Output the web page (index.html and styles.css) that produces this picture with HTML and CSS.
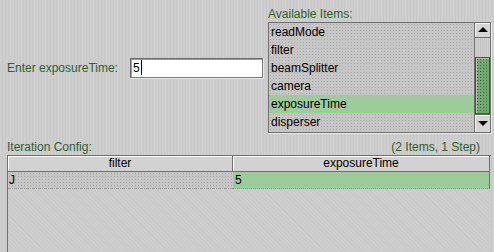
FILE: index.html
```html
<!DOCTYPE html>
<html lang="en">
<head>
    <meta charset="UTF-8">
    <title>Iteration Config</title>
    <link rel="stylesheet" href="styles.css">
</head>
<body>

    <div class="top">
        <div class="entry">
            <span class="label">Enter exposureTime:</span>
            <div class="field">5<span class="caret"></span></div>
        </div>

        <div class="avail">
            <div class="label avail-label">Available Items:</div>
            <div class="listbox">
                <ul class="items">
                    <li>readMode</li>
                    <li>filter</li>
                    <li>beamSplitter</li>
                    <li>camera</li>
                    <li class="selected">exposureTime</li>
                    <li>disperser</li>
                </ul>
                <div class="scrollbar">
                    <div class="arrow up"></div>
                    <div class="track"></div>
                    <div class="thumb"></div>
                    <div class="arrow down"></div>
                </div>
            </div>
        </div>
    </div>

    <div class="config-head label">
        <span>Iteration Config:</span>
        <span>(2 Items, 1 Step)</span>
    </div>

    <div class="grid">
        <div class="row head">
            <div class="cell">filter</div>
            <div class="cell">exposureTime</div>
        </div>
        <div class="row data">
            <div class="cell">J</div>
            <div class="cell green">5</div>
        </div>
    </div>

</body>
</html>
```

FILE: styles.css
```css
/* Page with a light stripe texture */
html, body {
    height: 100%;
}

body {
    margin: 0;
    display: flex;
    flex-direction: column;
    font-family: 'Liberation Sans', Arial, sans-serif;
    font-size: 12px;
    color: #000;
    background: repeating-linear-gradient(90deg, #cecece 0 2px, #c8c8c8 2px 3px);
}

.label {
    color: #2f5f2f;
}

/* Top area */
.top {
    display: flex;
    gap: 5px;
    padding: 6px 3px 0 7px;
}

.entry {
    width: 256px;
    display: flex;
    align-items: center;
    align-self: center;
    gap: 12px;
    margin-bottom: 4px;
}

.field {
    flex: 1;
    height: 18px;
    line-height: 18px;
    padding-left: 2px;
    background: #fff;
    border: 1px solid #6b6b6b;
    border-right-color: #7a7a7a;
    border-bottom-color: #7a7a7a;
    box-shadow: inset 1px 1px 0 #9a9a9a, 1px 1px 0 #e8e8e8;
    display: flex;
    align-items: center;
}

.caret {
    width: 1px;
    height: 15px;
    background: #000;
    margin-left: 1px;
}

.avail {
    width: 223px;
}

.avail-label {
    line-height: 16px;
}

/* List with scroll bar */
.listbox {
    display: flex;
    border: 1px solid #6e6e6e;
    box-shadow: 1px 1px 0 #ececec;
    background-color: #c6c6c6;
    background-image: radial-gradient(#aaaaaa 0.7px, transparent 0.8px);
    background-size: 3px 3px;
}

.items {
    flex: 1;
    list-style: none;
    margin: 0;
    padding: 0;
}

.items li {
    height: 18px;
    line-height: 18px;
    padding-left: 2px;
}

.items li.selected {
    background: #9dcc9b;
}

.scrollbar {
    width: 15px;
    display: flex;
    flex-direction: column;
    border-left: 1px solid #6e6e6e;
}

.arrow {
    background: #d6d6d6;
    box-shadow: inset 1px 1px 0 #f4f4f4;
    position: relative;
}

.arrow.up {
    height: 14px;
    border-bottom: 1px solid #6e6e6e;
}

.arrow.down {
    height: 17px;
    border-top: 1px solid #6e6e6e;
}

.arrow::after {
    content: "";
    position: absolute;
    left: 3px;
    border-left: 5px solid transparent;
    border-right: 5px solid transparent;
}

.arrow.up::after {
    top: 4px;
    border-bottom: 5px solid #000;
}

.arrow.down::after {
    top: 6px;
    border-top: 5px solid #000;
}

.track {
    height: 19px;
    background: repeating-linear-gradient(90deg, #d0d0d0 0 1px, #c4c4c4 1px 2px);
}

.thumb {
    height: 55px;
    border: 1px solid #2f5f2f;
    box-shadow: inset 1px 1px 0 #a8d8a6;
    background-color: #74a872;
    background-image: radial-gradient(#3a6c3a 0.5px, transparent 0.6px);
    background-size: 3px 3px;
}

/* Iteration config */
.config-head {
    display: flex;
    justify-content: space-between;
    line-height: 16px;
    margin-top: 6px;
    padding: 0 14px 0 7px;
}

.grid {
    flex: 1;
    margin-left: 7px;
    width: 483px;
    border-left: 1px solid #6e6e6e;
    border-top: 1px solid #6e6e6e;
    background: repeating-linear-gradient(45deg, #cdcdcd 0 2px, #c9c9c9 2px 3px);
}

.row {
    display: grid;
    grid-template-columns: 225px 257px;
}

.head .cell {
    height: 15px;
    line-height: 15px;
    text-align: center;
    background: #d2d2d2;
    border-right: 1px solid #6e6e6e;
    border-bottom: 1px solid #6e6e6e;
    box-shadow: inset 1px 1px 0 #fff;
}

.data .cell {
    height: 16px;
    line-height: 16px;
    padding-left: 1px;
    border-bottom: 1px dotted #9a9a9a;
    background-color: #c6c6c6;
    background-image: radial-gradient(#aaaaaa 0.7px, transparent 0.8px);
    background-size: 3px 3px;
}

.data .cell.green {
    padding-left: 2px;
    background: #9dcc9b;
    border-right: 1px solid #6e6e6e;
}
```
